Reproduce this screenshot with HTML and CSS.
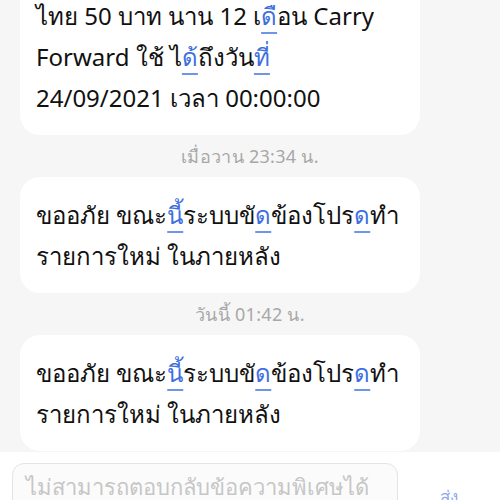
FILE: index.html
```html
<!DOCTYPE html>
<html lang="th">
<head>
<meta charset="utf-8">
<link rel="stylesheet" href="styles.css">
</head>
<body>
<div class="screen">
  <div class="chat">
    <div class="bubble">
      <p class="line">ไทย 50 บาท นาน 12 เ<span class="lk">ดื</span>อน Carry</p>
      <p class="line">Forward ใช้ ไ<span class="lk">ด้</span>ถึงวัน<span class="lk">ที่</span></p>
      <p class="line">24/09/2021 เวลา 00:00:00</p>
    </div>
    <div class="stamp">เมื่อวาน 23:34 น.</div>
    <div class="bubble">
      <p class="line">ขออภัย ขณะ<span class="lk">นี้</span>ระบบขั<span class="lk">ด</span>ข้องโปร<span class="lk">ด</span>ทำ</p>
      <p class="line">รายการใหม่ ในภายหลัง</p>
    </div>
    <div class="stamp">วันนี้ 01:42 น.</div>
    <div class="bubble">
      <p class="line">ขออภัย ขณะ<span class="lk">นี้</span>ระบบขั<span class="lk">ด</span>ข้องโปร<span class="lk">ด</span>ทำ</p>
      <p class="line">รายการใหม่ ในภายหลัง</p>
    </div>
  </div>
  <div class="composer">
    <div class="input">ไม่สามารถตอบกลับข้อความพิเศษได้</div>
    <div class="send">ส่ง</div>
  </div>
</div>
</body>
</html>
```

FILE: styles.css
```css
html, body {
  margin: 0;
  padding: 0;
  background: #f6f6f6;
}
body {
  font-family: "Noto Sans", "Liberation Sans", "DejaVu Sans", sans-serif;
  color: #111;
}
.screen {
  width: 500px;
  height: 500px;
  display: flex;
  flex-direction: column;
  overflow: hidden;
}
.chat {
  flex: 1;
  display: flex;
  flex-direction: column;
  justify-content: flex-end;
  padding: 0 20px 1px 20px;
  min-height: 0;
}
.bubble {
  background: #ffffff;
  border-radius: 20px;
  padding: 17px 16px;
  margin-right: 60px;
  flex-shrink: 0;
}
.line {
  margin: 0;
  font-size: 24px;
  line-height: 41px;
  white-space: nowrap;
}
.lk {
  color: #3d6fe0;
  text-decoration: underline;
  text-decoration-thickness: 2px;
  text-underline-offset: 7px;
  text-decoration-color: #6f95ea;
}
.stamp {
  height: 42px;
  display: flex;
  align-items: center;
  justify-content: center;
  font-size: 18px;
  color: #a8a8a8;
  flex-shrink: 0;
  letter-spacing: 0.3px;
}
.composer {
  height: 48px;
  flex-shrink: 0;
  background: #ffffff;
  display: flex;
  align-items: flex-start;
  padding: 11px 0 0 12px;
  box-sizing: border-box;
}
.input {
  width: 386px;
  height: 48px;
  box-sizing: border-box;
  border: 1px solid #e4e4e4;
  border-radius: 12px;
  background: #fbfbfb;
  font-size: 22px;
  line-height: 44px;
  color: #c6c6c6;
  padding-left: 13px;
  white-space: nowrap;
  overflow: hidden;
}
.send {
  margin-left: 42px;
  margin-top: 20px;
  font-size: 17px;
  color: #8fa9ec;
}
```
